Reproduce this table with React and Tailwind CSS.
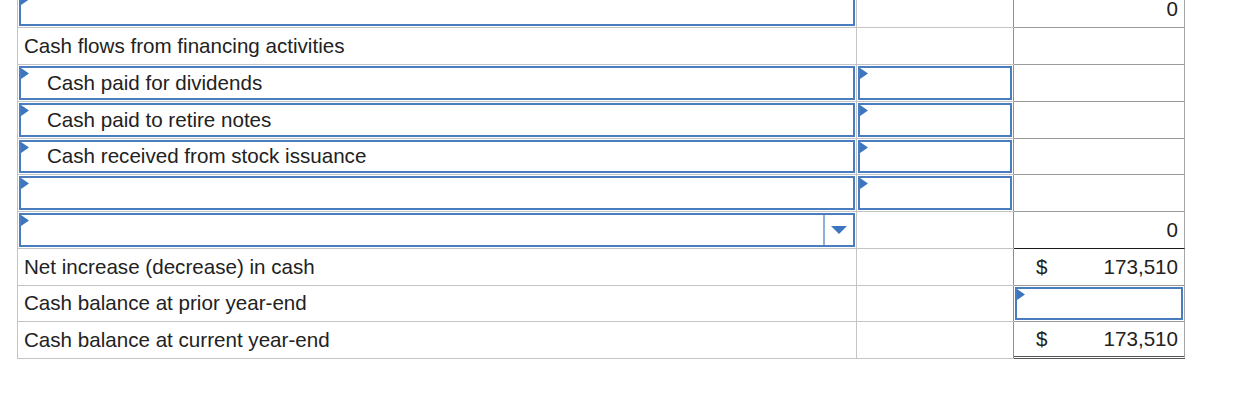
import React from 'react';

const Marker = () => (
  <svg className="absolute left-0 top-0" width="8" height="11" viewBox="0 0 8 11">
    <polygon points="0,0 8,5.5 0,11" fill="#3c76bf" />
  </svg>
);

const InputBox = ({ children, indent = false }) => (
  <div className="h-full p-[1px]">
    <div className={`relative h-full border-2 border-[#4a7dbf] flex items-center ${indent ? 'pl-[26px]' : ''}`}>
      <Marker />
      {children}
    </div>
  </div>
);

const SelectBox = () => (
  <div className="h-full p-[1px]">
    <div className="relative h-full border-2 border-[#4a7dbf] flex">
      <Marker />
      <div className="flex-1" />
      <div className="w-[30px] border-l-2 border-[#8fb0db] flex items-center justify-center">
        <svg width="16" height="8" viewBox="0 0 16 8">
          <polygon points="0,0 16,0 8,8" fill="#3c76bf" />
        </svg>
      </div>
    </div>
  </div>
);

const Row = ({ first, second, third, short = false, thirdBorder = 'border-b border-[#9a9a9a]' }) => (
  <div className={`flex ${short ? 'h-[36px]' : 'h-[37px]'}`}>
    <div className="w-[840px] border-l border-r border-b border-[#c4c4c4]">{first}</div>
    <div className="w-[157px] border-b border-[#c4c4c4]">
      <div className="h-full border-r border-[#8f8f8f]">{second}</div>
    </div>
    <div className={`w-[171px] border-r border-r-[#a6a6a6] ${thirdBorder}`}>{third}</div>
  </div>
);

const Label = ({ children }) => (
  <div className="h-full flex items-center pl-[6px]">{children}</div>
);

const Amount = ({ value, dollar = false }) => (
  <div className="h-full flex items-center justify-between pl-[22px] pr-[6px]">
    <span>{dollar ? '$' : ''}</span>
    <span>{value}</span>
  </div>
);

const financing = [
  'Cash paid for dividends',
  'Cash paid to retire notes',
  'Cash received from stock issuance',
  ''
];

export default function App() {
  return (
    <div className="w-[1245px] h-[408px] bg-white overflow-hidden text-[20.6px] leading-none text-[#222] font-['Liberation_Sans',Arial,sans-serif]">
      <div className="ml-[17px] -mt-[9px]">
        <Row first={<InputBox />} third={<Amount value="0" />} />
        <Row first={<Label>Cash flows from financing activities</Label>} />
        {financing.map((item, i) => (
          <Row
            key={i}
            short={i === 2}
            first={<InputBox indent>{item}</InputBox>}
            second={<InputBox />}
          />
        ))}
        <Row
          first={<SelectBox />}
          third={<Amount value="0" />}
          thirdBorder="border-b border-[#1a1a1a]"
        />
        <Row first={<Label>Net increase (decrease) in cash</Label>} third={<Amount value="173,510" dollar />} />
        <Row short first={<Label>Cash balance at prior year-end</Label>} third={<InputBox />} />
        <Row
          first={<Label>Cash balance at current year-end</Label>}
          third={<Amount value="173,510" dollar />}
          thirdBorder="border-b-[3px] border-double border-b-[#555]"
        />
      </div>
    </div>
  );
}
